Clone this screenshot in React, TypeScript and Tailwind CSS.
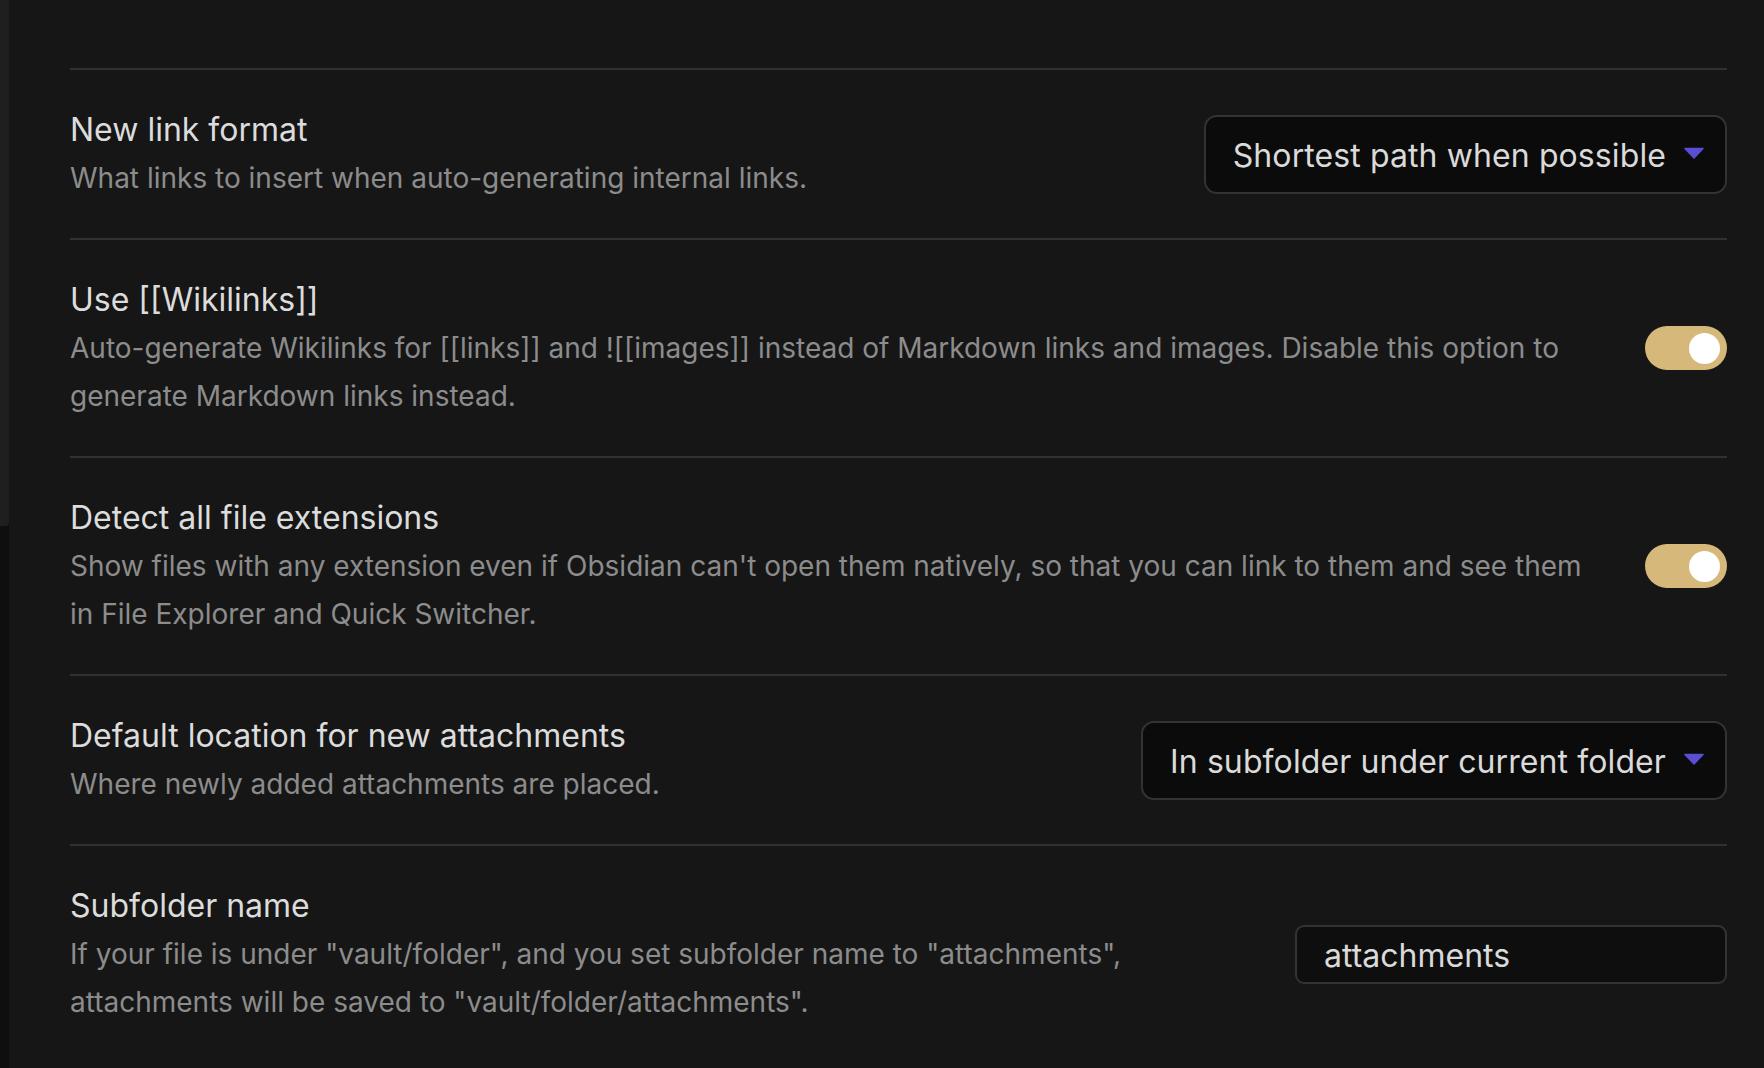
import React, { useState } from 'react';

interface SettingProps {
  name: string;
  description: string;
  children: React.ReactNode;
}

function SettingItem({ name, description, children }: SettingProps) {
  return (
    <div className="flex items-center border-t-2 border-[#313131] py-[36px]">
      <div className="flex-1 mr-[36px]">
        <div className="text-[32px] leading-[48px] text-[#dcdcdc]">{name}</div>
        <div className="text-[28px] leading-[48px] text-[#8c8c8c]">{description}</div>
      </div>
      <div className="flex shrink-0 items-center">{children}</div>
    </div>
  );
}

function Dropdown({ value }: { value: string }) {
  return (
    <div className="flex h-[79px] items-center rounded-[13px] border-2 border-[#333] bg-[#0b0b0b] pl-[27px] pr-[21px] pt-[3px]">
      <span className="text-[32px] tracking-[0.1px] text-[#dadada]">{value}</span>
      <svg className="ml-[18px] mb-[6px]" width="20" height="12" viewBox="0 0 20 12">
        <path d="M1 1.5 L19 1.5 L10 11 Z" fill="#5a4fd2" stroke="#5a4fd2" strokeWidth="1.5" strokeLinejoin="round" />
      </svg>
    </div>
  );
}

function Toggle({ initial }: { initial: boolean }) {
  const [on, setOn] = useState(initial);
  return (
    <button
      onClick={() => setOn(!on)}
      className={`flex h-[44px] w-[82px] items-center rounded-full px-[7px] ${
        on ? 'justify-end bg-[#d6b97a]' : 'justify-start bg-[#3a3a3a]'
      }`}
    >
      <span className="block h-[31px] w-[31px] rounded-full bg-white" />
    </button>
  );
}

export default function App() {
  return (
    <div className="flex h-[1068px] w-full overflow-hidden bg-[#161616] font-['Inter','Noto_Sans',sans-serif]">
      {/* sidebar edge */}
      <div className="flex w-[9px] shrink-0 flex-col bg-[#0f0f0f]">
        <div className="h-[526px] rounded-br-[4px] bg-[#1f1f1f]" />
      </div>

      <div className="flex-1 pl-[61px] pr-[37px] pt-[68px]">
        <SettingItem
          name="New link format"
          description="What links to insert when auto-generating internal links."
        >
          <Dropdown value="Shortest path when possible" />
        </SettingItem>

        <SettingItem
          name="Use [[Wikilinks]]"
          description="Auto-generate Wikilinks for [[links]] and ![[images]] instead of Markdown links and images. Disable this option to generate Markdown links instead."
        >
          <Toggle initial={true} />
        </SettingItem>

        <SettingItem
          name="Detect all file extensions"
          description="Show files with any extension even if Obsidian can't open them natively, so that you can link to them and see them in File Explorer and Quick Switcher."
        >
          <Toggle initial={true} />
        </SettingItem>

        <SettingItem
          name="Default location for new attachments"
          description="Where newly added attachments are placed."
        >
          <Dropdown value="In subfolder under current folder" />
        </SettingItem>

        <SettingItem
          name="Subfolder name"
          description={'If your file is under "vault/folder", and you set subfolder name to "attachments", attachments will be saved to "vault/folder/attachments".'}
        >
          <input
            defaultValue="attachments"
            className="h-[59px] w-[432px] rounded-[9px] border-2 border-[#333] bg-[#0e0e0e] px-[27px] pt-[2px] text-[32px] text-[#dadada] outline-none"
          />
        </SettingItem>
      </div>
    </div>
  );
}
